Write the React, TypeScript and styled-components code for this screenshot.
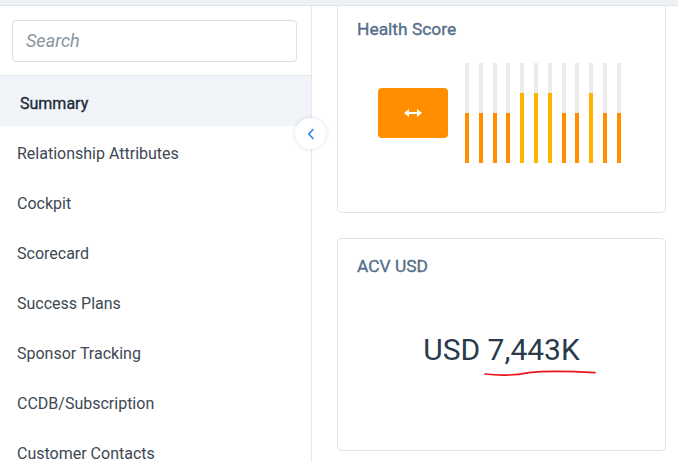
import React from "react";
import styled, { createGlobalStyle } from "styled-components";

const GlobalStyle = createGlobalStyle`
  html, body {
    margin: 0;
    padding: 0;
    background: #ffffff;
  }
  body {
    font-family: Roboto, "Liberation Sans", Arial, sans-serif;
  }
  * {
    box-sizing: border-box;
  }
`;

const Page = styled.div`
  width: 678px;
  height: 462px;
  overflow: hidden;
  display: flex;
  flex-direction: column;
  background: #ffffff;
`;

const TopStrip = styled.div`
  height: 6px;
  flex: none;
  background: #eef1f4;
  border-bottom: 1px solid #e0e5ea;
`;

const Body = styled.div`
  flex: 1;
  display: flex;
  min-height: 0;
`;

const Sidebar = styled.aside`
  position: relative;
  width: 312px;
  flex: none;
  border-right: 1px solid #e6e9ed;
  display: flex;
  flex-direction: column;
`;

const SearchBlock = styled.div`
  padding: 14px 14px 13px 12px;
  border-bottom: 1px solid #e4e8ec;
`;

const SearchInput = styled.input`
  width: 285px;
  height: 42px;
  border: 1px solid #d9e0e7;
  border-radius: 4px;
  padding: 0 13px 2px 13px;
  font-family: Roboto, "Liberation Sans", Arial, sans-serif;
  font-size: 18px;
  font-style: italic;
  color: #2c3e50;
  outline: none;
  &::placeholder {
    color: #8994a0;
  }
`;

const NavList = styled.ul`
  list-style: none;
  margin: 0;
  padding: 0;
`;

const NavItem = styled.li<{ $active?: boolean }>`
  height: 50px;
  padding: 4px 0 0 ${p => (p.$active ? "20px" : "17px")};
  display: flex;
  align-items: center;
  font-size: 16px;
  font-weight: 400;
  -webkit-text-stroke: ${p => (p.$active ? "0.35px" : "0")};
  color: ${p => (p.$active ? "#1e2b3a" : "#3d4853")};
  background: ${p => (p.$active ? "#f1f4f8" : "transparent")};
  white-space: nowrap;
`;

const CollapseButton = styled.button`
  position: absolute;
  left: 295px;
  top: 112px;
  width: 31px;
  height: 31px;
  border-radius: 50%;
  border: none;
  background: #ffffff;
  box-shadow: 0 0 4px rgba(30, 50, 80, 0.16);
  display: flex;
  align-items: center;
  justify-content: center;
  padding: 0;
  z-index: 2;
`;

const Main = styled.main`
  flex: 1;
  padding: 0 12px 0 25px;
  display: flex;
  flex-direction: column;
  gap: 25px;
`;

const Card = styled.section<{ $scrolled?: boolean; $height: number }>`
  width: 329px;
  height: ${p => p.$height}px;
  border: 1px solid #dde3ea;
  border-top: ${p => (p.$scrolled ? "none" : "1px solid #dde3ea")};
  border-radius: ${p => (p.$scrolled ? "0 0 5px 5px" : "5px")};
  padding: ${p => (p.$scrolled ? "13px" : "17px")} 19px 0 19px;
  display: flex;
  flex-direction: column;
`;

const CardTitle = styled.h3`
  margin: 0;
  font-size: 17.4px;
  line-height: 20px;
  font-weight: 400;
  -webkit-text-stroke: 0.35px #546f8a;
  color: #546f8a;
`;

const ScoreRow = styled.div`
  margin-top: 24px;
  padding-left: 21px;
  display: flex;
  align-items: center;
  gap: 17px;
  height: 100px;
`;

const TrendBox = styled.div`
  width: 70px;
  height: 50px;
  border-radius: 4px;
  background: #ff8f00;
  display: flex;
  align-items: center;
  justify-content: center;
`;

const Bars = styled.div`
  display: flex;
  gap: 9.8px;
  height: 100px;
`;

const Bar = styled.div<{ $level: number; $color: string }>`
  width: 4px;
  height: 100%;
  background: linear-gradient(
    to top,
    ${p => p.$color} 0,
    ${p => p.$color} ${p => p.$level}%,
    #ebebeb ${p => p.$level}%,
    #ebebeb 100%
  );
`;

const ValueArea = styled.div`
  margin-top: 56px;
  display: flex;
  justify-content: center;
`;

const Value = styled.div`
  position: relative;
  font-size: 30px;
  line-height: 36px;
  font-weight: 400;
  color: #2a3a4d;
  white-space: nowrap;
`;

const Scribble = styled.svg`
  position: absolute;
  left: 60px;
  top: 37px;
  overflow: visible;
`;

const navItems = [
  "Summary",
  "Relationship Attributes",
  "Cockpit",
  "Scorecard",
  "Success Plans",
  "Sponsor Tracking",
  "CCDB/Subscription",
  "Customer Contacts",
];

const healthBars = [50, 50, 50, 50, 70, 70, 70, 50, 50, 70, 50, 50];

export default function App() {
  return (
    <Page>
      <GlobalStyle />
      <TopStrip />
      <Body>
        <Sidebar>
          <SearchBlock>
            <SearchInput placeholder="Search" />
          </SearchBlock>
          <NavList>
            {navItems.map((item, i) => (
              <NavItem key={item} $active={i === 0}>
                {item}
              </NavItem>
            ))}
          </NavList>
          <CollapseButton aria-label="Collapse">
            <svg width="8" height="12" viewBox="0 0 8 12">
              <path
                d="M6 1.5 L1.8 6 L6 10.5"
                fill="none"
                stroke="#1e88f0"
                strokeWidth="1.6"
                strokeLinecap="round"
                strokeLinejoin="round"
              />
            </svg>
          </CollapseButton>
        </Sidebar>
        <Main>
          <Card $scrolled $height={207}>
            <CardTitle>Health Score</CardTitle>
            <ScoreRow>
              <TrendBox>
                <svg width="18" height="10" viewBox="0 0 18 10">
                  <path d="M4 5 H14" stroke="#ffffff" strokeWidth="2" />
                  <polygon points="0,5 5,1 5,9" fill="#ffffff" />
                  <polygon points="18,5 13,1 13,9" fill="#ffffff" />
                </svg>
              </TrendBox>
              <Bars>
                {healthBars.map((level, i) => (
                  <Bar
                    key={i}
                    $level={level}
                    $color={level > 50 ? "#ffb300" : "#ff8f00"}
                  />
                ))}
              </Bars>
            </ScoreRow>
          </Card>
          <Card $height={213}>
            <CardTitle>ACV USD</CardTitle>
            <ValueArea>
              <Value>
                USD 7,443K
                <Scribble width="114" height="8" viewBox="0 0 114 8">
                  <path
                    d="M2 5 C 14 6.5, 30 6.8, 46 3.6 C 62 1.8, 90 2.4, 112 3.6"
                    fill="none"
                    stroke="#e8151b"
                    strokeWidth="1.6"
                    strokeLinecap="round"
                  />
                </Scribble>
              </Value>
            </ValueArea>
          </Card>
        </Main>
      </Body>
    </Page>
  );
}
